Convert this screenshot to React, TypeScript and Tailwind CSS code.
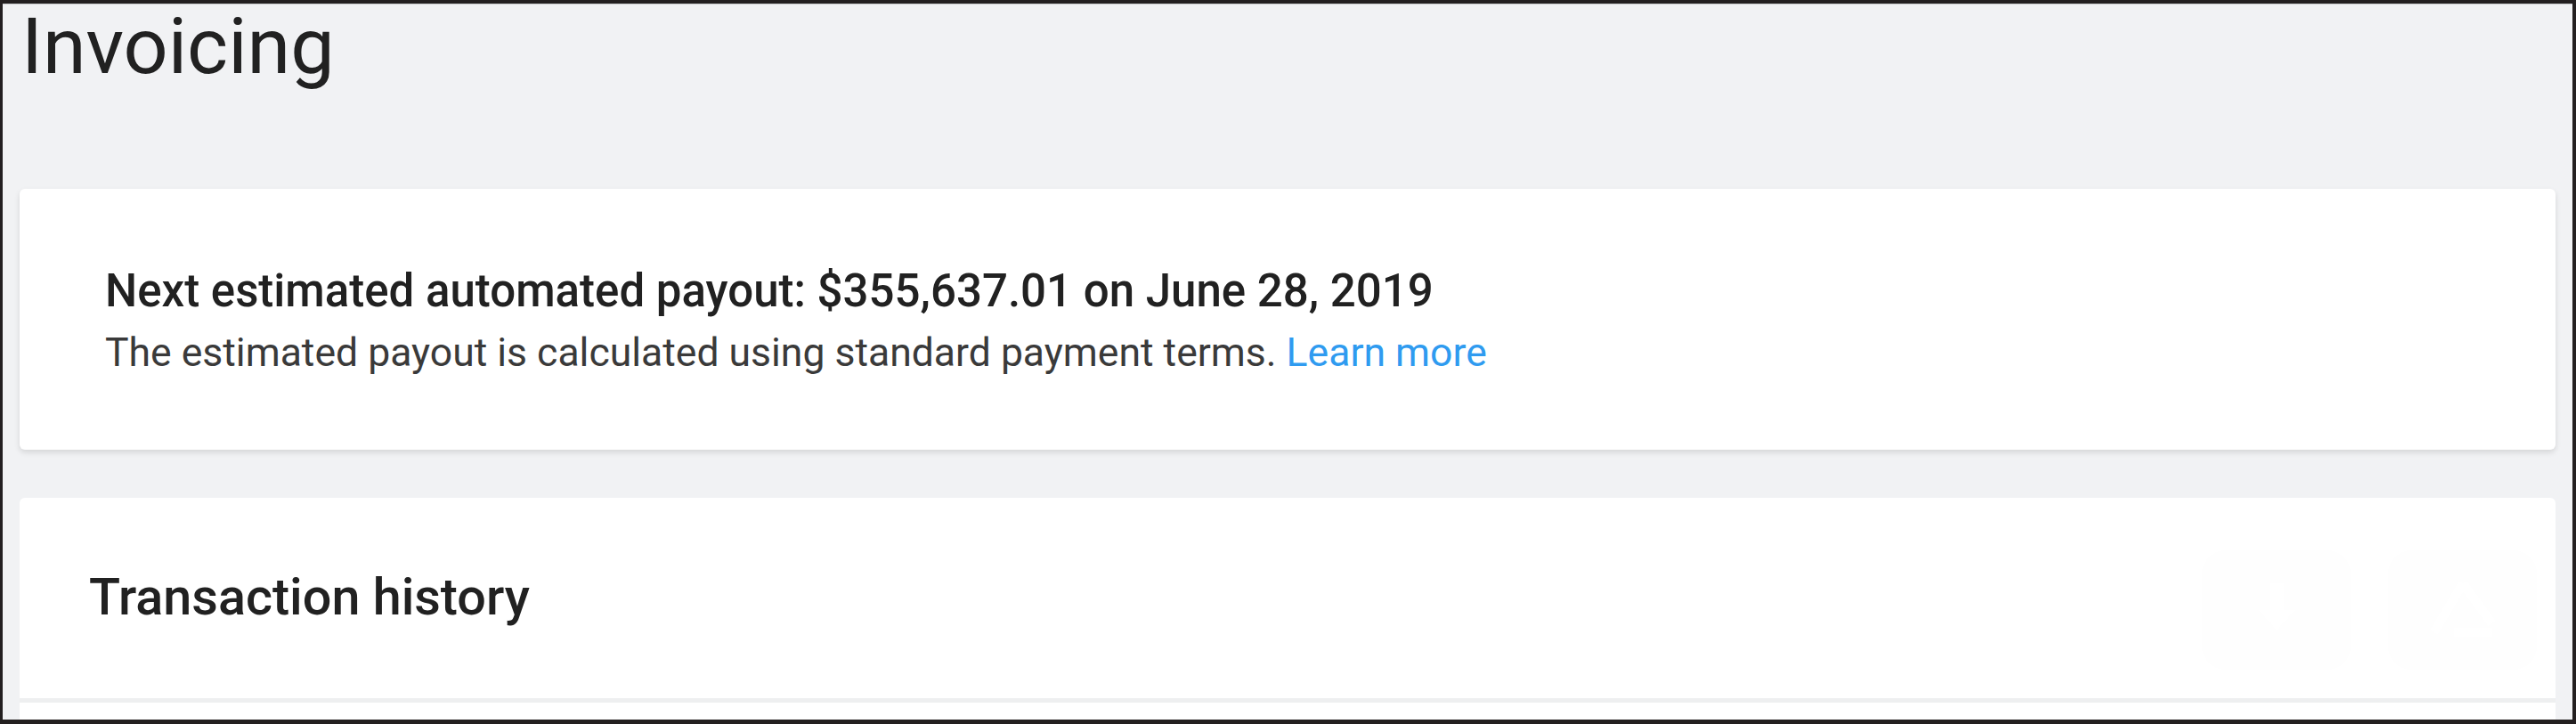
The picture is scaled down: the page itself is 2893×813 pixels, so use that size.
import React from 'react';

export default function App() {
  return (
    <div className="w-[2893px] h-[813px] overflow-hidden border-t-4 border-l-[3px] border-r-4 border-b-[5px] border-[#231f20] bg-[#f1f2f4] font-['Roboto',sans-serif] text-[#212121]">
      <div className="border-t border-[#c9cacc]" />
      <div className="px-[19px]">
        <h1 className="pl-[2px] pt-[3px] text-[88px] leading-none font-normal">Invoicing</h1>

        {/* payout card */}
        <div className="mt-[116px] bg-white rounded-[6px] shadow-[0_3px_6px_rgba(0,0,0,0.12)] pl-[96px] pt-[89px] pb-[86px]">
          <div className="text-[51px] leading-none font-medium">
            Next estimated automated payout: $355,637.01 on June 28, 2019
          </div>
          <div className="mt-[22px] text-[44.5px] leading-none text-[#3a3a3a]">
            The estimated payout is calculated using standard payment terms.{' '}
            <a className="text-[#2f9bf0]">Learn more</a>
          </div>
        </div>

        {/* transaction history */}
        <div className="mt-[54px] bg-white rounded-t-[6px]">
          <div className="h-[230px] flex items-center justify-between pl-[78px] pr-[21px] border-b-[5px] border-[#eeeff0]">
            <h2 className="text-[57.5px] leading-none font-medium">Transaction history</h2>
            <div className="flex gap-[42px] mt-[28px]">
              <button className="w-[167px] h-[134px] rounded-[26px] bg-[#fefefe] flex items-center justify-center">
                <svg width="60" height="70" viewBox="0 0 24 28" fill="#ffffff">
                  <path d="M9 2h6v12h5l-8 9-8-9h5z" />
                </svg>
              </button>
              <button className="w-[167px] h-[134px] rounded-[26px] bg-[#fefefe] flex items-center justify-center">
                <svg width="90" height="80" viewBox="0 0 36 32" fill="none" stroke="#ffffff" strokeWidth="4" strokeLinejoin="round">
                  <path d="M18 4 L5 26 M18 4 L31 22 M14 26 H31" />
                </svg>
              </button>
            </div>
          </div>
          <div className="h-[30px]" />
        </div>
      </div>
    </div>
  );
}
